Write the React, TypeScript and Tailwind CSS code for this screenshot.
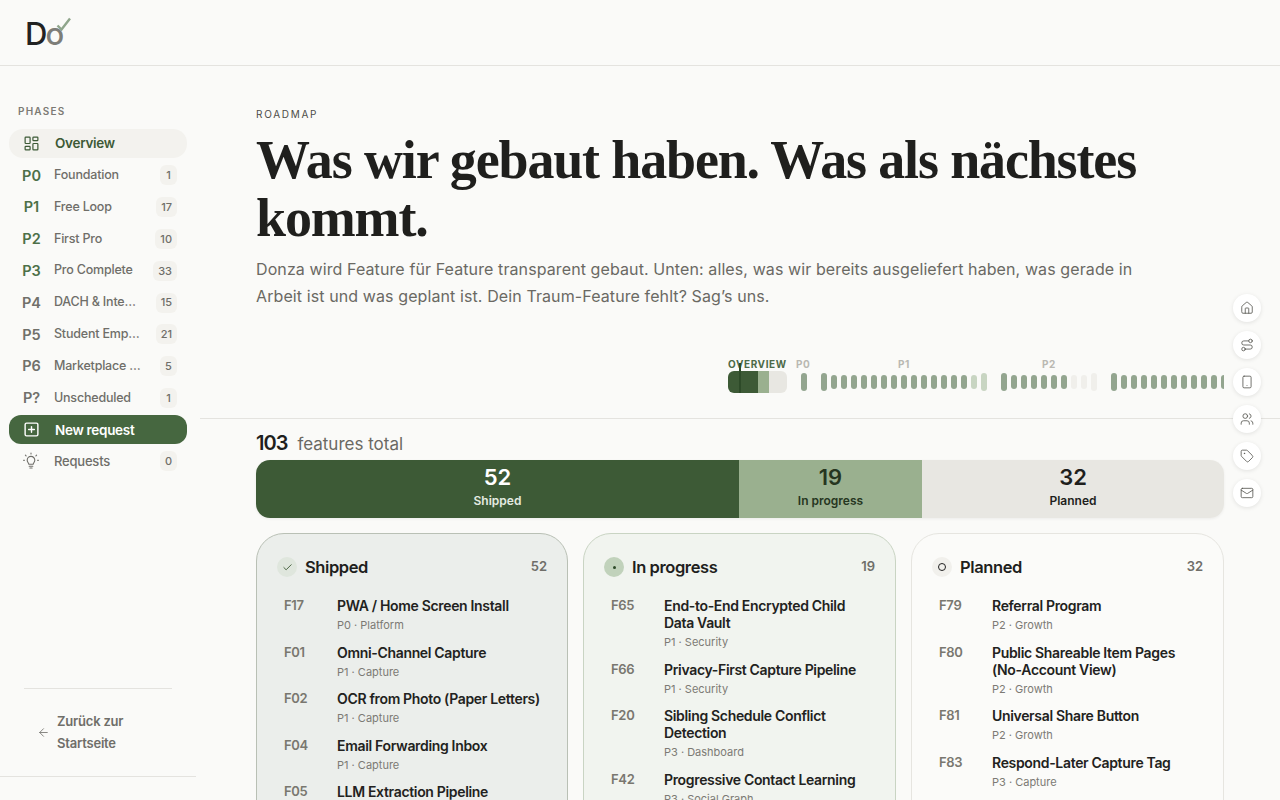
import React from 'react';
import { ArrowLeft, Check, House, LayoutDashboard, Mail, Route, Smartphone, SquarePlus, Tag, Users } from 'lucide-react';

const phases = [
  { id: 'P0', name: 'Foundation', count: 1, green: true },
  { id: 'P1', name: 'Free Loop', count: 17, green: true },
  { id: 'P2', name: 'First Pro', count: 10, green: true },
  { id: 'P3', name: 'Pro Complete', count: 33, green: true },
  { id: 'P4', name: 'DACH & Integrations', count: 15, green: false },
  { id: 'P5', name: 'Student Employment', count: 21, green: false },
  { id: 'P6', name: 'Marketplace & More', count: 5, green: false },
  { id: 'P?', name: 'Unscheduled', count: 1, green: false },
];

const columns = [
  {
    title: 'Shipped',
    count: 52,
    box: 'border-[#b9c0b5] bg-[#ebeeeb]',
    items: [
      { id: 'F17', title: 'PWA / Home Screen Install', meta: 'P0 · Platform' },
      { id: 'F01', title: 'Omni-Channel Capture', meta: 'P1 · Capture' },
      { id: 'F02', title: 'OCR from Photo (Paper Letters)', meta: 'P1 · Capture' },
      { id: 'F04', title: 'Email Forwarding Inbox', meta: 'P1 · Capture' },
      { id: 'F05', title: 'LLM Extraction Pipeline', meta: 'P1 · Capture' },
    ],
  },
  {
    title: 'In progress',
    count: 19,
    box: 'border-[#c9d4c3] bg-[#f1f4ef]',
    items: [
      { id: 'F65', title: 'End-to-End Encrypted Child Data Vault', meta: 'P1 · Security' },
      { id: 'F66', title: 'Privacy-First Capture Pipeline', meta: 'P1 · Security' },
      { id: 'F20', title: 'Sibling Schedule Conflict Detection', meta: 'P3 · Dashboard' },
      { id: 'F42', title: 'Progressive Contact Learning', meta: 'P3 · Social Graph' },
    ],
  },
  {
    title: 'Planned',
    count: 32,
    box: 'border-[#e6e5e0] bg-[#fbfbf9]',
    items: [
      { id: 'F79', title: 'Referral Program', meta: 'P2 · Growth' },
      { id: 'F80', title: 'Public Shareable Item Pages (No-Account View)', meta: 'P2 · Growth' },
      { id: 'F81', title: 'Universal Share Button', meta: 'P2 · Growth' },
      { id: 'F83', title: 'Respond-Later Capture Tag', meta: 'P3 · Capture' },
    ],
  },
];

const dockIcons = [House, Route, Smartphone, Users, Tag, Mail];

// d = dark, l = light green, e = empty
const p1Ticks = 'dddddddddddddddll'.split('');
const p2Ticks = 'dddddddeee'.split('');
const p3Ticks = 'ddddddddddddd'.split('');

const Tick = ({ kind, tall }: { kind: string; tall: boolean }) => (
  <div
    className={`w-[6px] shrink-0 rounded-[3px] ${tall ? 'h-[18px]' : 'h-[14px]'} ${
      kind === 'd' ? 'bg-[#93a58f]' : kind === 'l' ? 'bg-[#c8d5c2]' : 'bg-[#f0efeb]'
    }`}
  />
);

const BulbIcon = () => (
  <svg width="18" height="18" viewBox="0 0 18 18" fill="none" stroke="currentColor" strokeWidth="1.1" strokeLinecap="round" strokeLinejoin="round">
    <path d="M6.8 12.2c0-1.2-1.6-2-1.6-4a3.8 3.8 0 0 1 7.6 0c0 2-1.6 2.800-1.600 4z" />
    <path d="M7.200 14.200h3.600M7.900 16h2.200" />
    <path d="M9 1v1M3.400 3.200l.7.7M14.600 3.200l-.7.7M1.500 8.200h1M15.500 8.200h1" />
  </svg>
);

const StatusDot = ({ title }: { title: string }) => {
  if (title === 'Shipped') {
    return (
      <div className="w-5 h-5 rounded-full bg-[#dfe6dd] flex items-center justify-center">
        <Check size={11} className="text-[#3d5a36]" strokeWidth={2} />
      </div>
    );
  }
  if (title === 'In progress') {
    return (
      <div className="w-5 h-5 rounded-full bg-[#c1d2bb] flex items-center justify-center">
        <div className="w-[3px] h-[3px] rounded-full bg-[#2d4a28]" />
      </div>
    );
  }
  return (
    <div className="w-5 h-5 rounded-full bg-[#f1f0ec] flex items-center justify-center">
      <div className="w-[8px] h-[8px] rounded-full border-[1.5px] border-[#222222]" />
    </div>
  );
};

const App = () => {
  return (
    <div className="relative h-screen overflow-hidden bg-[#fafaf8] font-['Inter',sans-serif] text-[#1f1f1d]">
      <header className="h-[66px] border-b border-[#e4e3df] pl-[25px] pt-[17px]">
        <div className="relative w-[50px] h-[32px]">
          <span className="absolute left-0 top-[1px] text-[31px] leading-[32px] font-medium tracking-[-2px] text-[#222222]">
            D<span className="text-[#7d7d78]">o</span>
          </span>
          <svg className="absolute left-[31px] top-0 w-[16px] h-[14px]" viewBox="0 0 16 14" fill="none">
            <path d="M1.500 8.500l4 4 8.500-11" stroke="#8fa58b" strokeWidth="2.400" />
          </svg>
        </div>
      </header>

      <div className="flex h-[734px]">
        <aside className="w-[196px] shrink-0 flex flex-col pt-[38px] pl-[9px] pr-[9px] border-b border-[#e4e3df] h-[711px]">
          <div className="pl-[9px] text-[10px] leading-[14px] font-semibold tracking-[1.2px] text-[#7c7a74]">PHASES</div>
          <div className="mt-[11px] h-[29px] rounded-[14px] bg-[#f3f2ee] flex items-center pl-[14px] text-[#3d5a36]">
            <LayoutDashboard size={17} strokeWidth={1.7} />
            <span className="ml-[15px] text-[13.5px] font-semibold tracking-[-0.3px]">Overview</span>
          </div>
          <div className="mt-[1.5px] flex flex-col">
            {phases.map((p) => (
              <div key={p.id} className="h-[31.8px] flex items-center">
                <span className={`w-[45px] text-center text-[14.5px] font-semibold ${p.green ? 'text-[#4d7048]' : 'text-[#70706a]'}`}>{p.id}</span>
                <span className="w-[88px] truncate text-[12.5px] font-medium tracking-[-0.2px] text-[#6f6e69]">{p.name}</span>
                <span className="ml-auto mr-[10px] min-w-[17px] h-[20px] px-[5px] rounded-[6px] bg-[#f3f2ee] flex items-center justify-center text-[11px] font-medium text-[#6f6e69]">{p.count}</span>
              </div>
            ))}
          </div>
          <div className="mt-[1.5px] h-[29px] rounded-[12px] bg-[#466740] flex items-center pl-[14px] text-white">
            <SquarePlus size={17} strokeWidth={2} />
            <span className="ml-[15px] text-[13.5px] font-semibold tracking-[-0.3px]">New request</span>
          </div>
          <div className="mt-[1px] h-[32px] flex items-center pl-[13px] text-[#6f6e69]">
            <BulbIcon />
            <span className="ml-[14px] text-[13px] font-medium tracking-[-0.2px]">Requests</span>
            <span className="ml-auto mr-[10px] min-w-[17px] h-[20px] px-[5px] rounded-[6px] bg-[#f3f2ee] flex items-center justify-center text-[11px] font-medium">0</span>
          </div>
          <div className="mt-auto mx-[15px] border-t border-[#e4e3df] pt-[21px] pb-[22px] flex items-center pl-[13px] text-[#6f6e69]">
            <ArrowLeft size={13} strokeWidth={1.5} />
            <span className="ml-[7px] text-[13px] leading-[22px] font-semibold tracking-[-0.2px]">Zurück zur<br />Startseite</span>
          </div>
        </aside>

        <main className="flex-1 min-w-0 pt-[42px]">
          <div className="pl-[60px] pr-[56px]">
            <div className="text-[10px] leading-[12px] tracking-[1.7px] text-[#4d4c47]">ROADMAP</div>
            <h1 className="mt-[11px] font-['Liberation_Serif',serif] font-bold text-[54px] leading-[58px] tracking-[-1.15px] text-[#1f1f1d]">
              Was wir gebaut haben. Was als nächstes kommt.
            </h1>
            <p className="mt-[9px] w-[900px] text-[16px] leading-[27px] tracking-[0.1px] text-[#6a6963]">
              Donza wird Feature für Feature transparent gebaut. Unten: alles, was wir bereits ausgeliefert haben, was gerade in Arbeit ist und was geplant ist. Dein Traum-Feature fehlt? Sag’s uns.
            </p>
          </div>

          <div className="mt-[47px] ml-[4px] h-[62px] border-b border-[#e4e3df] pl-[528px] pr-[56px]">
            <div className="flex gap-[14px] overflow-hidden">
              <div className="relative w-[59px] shrink-0">
                <div className="text-[10px] leading-[14px] font-bold tracking-[0.6px] text-[#4d6a47] whitespace-nowrap">OVERVIEW</div>
                <div className="h-[22px] rounded-[6px] overflow-hidden flex">
                  <div className="w-[30px] bg-[#3d5a36]" />
                  <div className="w-[11px] bg-[#9ab08f]" />
                  <div className="w-[18px] bg-[#e8e7e2]" />
                </div>
                <div className="absolute left-[11px] top-[6px] w-[2px] h-[37px] bg-[#2d4a28]" />
              </div>
              <div className="shrink-0 w-[6px]">
                <div className="text-[10px] leading-[14px] font-bold tracking-[0.6px] text-[#b9b8b2] whitespace-nowrap ml-[-5px]">P0</div>
                <div className="h-[22px] flex items-center">
                  <Tick kind="d" tall />
                </div>
              </div>
              <div className="shrink-0">
                <div className="text-center text-[10px] leading-[14px] font-bold tracking-[0.6px] text-[#b9b8b2]">P1</div>
                <div className="h-[22px] flex items-center gap-[4px]">
                  {p1Ticks.map((k, i) => <Tick key={i} kind={k} tall={i === 0 || i === p1Ticks.length - 1} />)}
                </div>
              </div>
              <div className="shrink-0">
                <div className="text-center text-[10px] leading-[14px] font-bold tracking-[0.6px] text-[#b9b8b2]">P2</div>
                <div className="h-[22px] flex items-center gap-[4px]">
                  {p2Ticks.map((k, i) => <Tick key={i} kind={k} tall={i === 0 || i === p2Ticks.length - 1} />)}
                </div>
              </div>
              <div className="shrink-0">
                <div className="h-[14px]" />
                <div className="h-[22px] flex items-center gap-[4px]">
                  {p3Ticks.map((k, i) => <Tick key={i} kind={k} tall={i === 0} />)}
                </div>
              </div>
            </div>
          </div>

          <div className="pl-[60px] pr-[56px]">
            <div className="mt-[9px] h-[24px] flex items-baseline">
              <span className="text-[20px] font-semibold tracking-[-1px]">103</span>
              <span className="ml-[10px] text-[17px] text-[#6a6963]">features total</span>
            </div>
            <div className="mt-[8px] h-[58px] rounded-[14px] overflow-hidden flex text-center shadow-[0_1px_3px_rgba(0,0,0,0.06)]">
              <div className="w-[483px] bg-[#3d5a36] text-white pt-[3px]">
                <div className="text-[22px] leading-[28px] font-semibold">52</div>
                <div className="mt-[2px] text-[12px] leading-[16px] font-semibold text-[#e4ebe1]">Shipped</div>
              </div>
              <div className="w-[183px] bg-[#9ab08f] text-[#26361f] pt-[3px]">
                <div className="text-[22px] leading-[28px] font-semibold">19</div>
                <div className="mt-[2px] text-[12px] leading-[16px] font-semibold">In progress</div>
              </div>
              <div className="flex-1 bg-[#e8e7e2] pt-[3px]">
                <div className="text-[22px] leading-[28px] font-semibold">32</div>
                <div className="mt-[2px] text-[12px] leading-[16px] font-semibold">Planned</div>
              </div>
            </div>
            <div className="mt-[15px] grid grid-cols-[312px_313px_1fr] gap-[15px]">
              {columns.map((c) => (
                <div key={c.title} className={`rounded-[28px] border px-[20px] pt-[23px] h-[400px] ${c.box}`}>
                  <div className="flex items-center h-[20px]">
                    <StatusDot title={c.title} />
                    <span className="ml-[8px] text-[16.5px] font-semibold tracking-[-0.4px]">{c.title}</span>
                    <span className="ml-auto text-[13px] font-semibold text-[#6f6e69]">{c.count}</span>
                  </div>
                  <div className="mt-[20px] pl-[7px] flex flex-col gap-[11.5px]">
                    {c.items.map((it) => (
                      <div key={it.id} className="flex">
                        <span className="w-[53px] shrink-0 text-[13px] leading-[17px] font-semibold tracking-[-0.3px] text-[#79776f]">{it.id}</span>
                        <div className="min-w-0">
                          <div className="text-[14px] leading-[17px] font-semibold tracking-[-0.33px] text-[#222220]">{it.title}</div>
                          <div className="mt-[4px] text-[11px] leading-[14px] text-[#7c7a74]">{it.meta}</div>
                        </div>
                      </div>
                    ))}
                  </div>
                </div>
              ))}
            </div>
          </div>
        </main>
      </div>

      {/* floating section nav */}
      <div className="absolute left-[1233px] top-[293.5px] flex flex-col gap-[9.2px]">
        {dockIcons.map((Icon, i) => (
          <div key={i} className="w-[28px] h-[28px] rounded-full bg-white shadow-[0_1px_4px_rgba(0,0,0,0.1)] flex items-center justify-center text-[#55544f]">
            <Icon size={14} strokeWidth={1.4} />
          </div>
        ))}
      </div>
    </div>
  );
};

export default App;
